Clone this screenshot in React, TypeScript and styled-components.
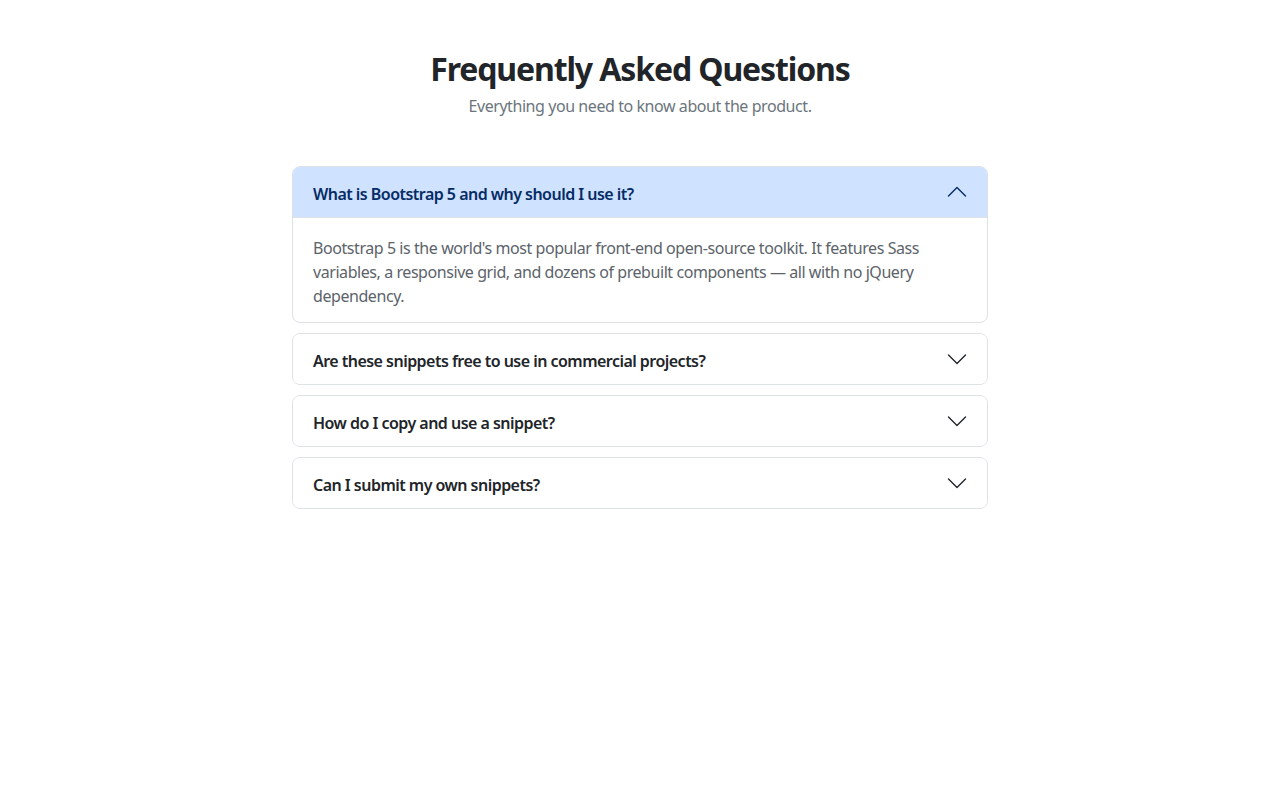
import React, { useState } from "react";
import styled, { createGlobalStyle } from "styled-components";

const GlobalStyle = createGlobalStyle`
  * { box-sizing: border-box; }
  html, body { margin: 0; padding: 0; background: #fff; }
  body {
    font-family: "Noto Sans", "Open Sans", "Liberation Sans", sans-serif;
    color: #212529;
  }
`;

const Page = styled.main`
  display: flex;
  flex-direction: column;
  align-items: center;
  padding: 50px 12px 40px;
`;

const Header = styled.header`
  display: flex;
  flex-direction: column;
  align-items: center;
  margin-bottom: 48px;
`;

const Title = styled.h2`
  margin: 0 0 6px;
  font-size: 32px;
  line-height: 1.2;
  font-weight: 700;
  letter-spacing: -0.035em;
  color: #212529;
`;

const Subtitle = styled.p`
  margin: 0;
  font-size: 16px;
  line-height: 24px;
  letter-spacing: -0.027em;
  color: #6c757d;
`;

const Accordion = styled.div`
  width: 696px;
  display: flex;
  flex-direction: column;
  gap: 10px;
`;

const Item = styled.div`
  border: 1px solid #dee2e6;
  border-radius: 8px;
  overflow: hidden;
  background: #fff;
`;

const Trigger = styled.button<{ $open: boolean }>`
  width: 100%;
  display: flex;
  align-items: center;
  justify-content: space-between;
  padding: 17px 20px 13px;
  border: 0;
  margin: 0;
  font-family: inherit;
  font-size: 16px;
  line-height: 20px;
  font-weight: 600;
  letter-spacing: -0.033em;
  text-align: left;
  cursor: pointer;
  background: ${(p) => (p.$open ? "#cfe2ff" : "#fff")};
  color: ${(p) => (p.$open ? "#052c65" : "#212529")};
  border-bottom: ${(p) => (p.$open ? "1px solid #dee2e6" : "0")};
`;

const Chevron = styled.svg<{ $open: boolean }>`
  flex-shrink: 0;
  width: 20px;
  height: 20px;
  margin-top: -4px;
  transform: ${(p) => (p.$open ? "rotate(180deg)" : "none")};
`;

const Body = styled.div`
  padding: 18px 20px 14px;
  font-size: 16px;
  line-height: 24px;
  letter-spacing: -0.027em;
  color: #5c636a;
`;

const faqs = [
  {
    q: "What is Bootstrap 5 and why should I use it?",
    a: "Bootstrap 5 is the world's most popular front-end open-source toolkit. It features Sass variables, a responsive grid, and dozens of prebuilt components — all with no jQuery dependency.",
  },
  {
    q: "Are these snippets free to use in commercial projects?",
    a: "Yes. All snippets are released under the MIT license, so you can use them in personal and commercial projects.",
  },
  {
    q: "How do I copy and use a snippet?",
    a: "Open a snippet, click the copy button, and paste the HTML into your Bootstrap 5 project.",
  },
  {
    q: "Can I submit my own snippets?",
    a: "Absolutely. Create an account and use the submit form to share your snippet with the community.",
  },
];

export default function App() {
  const [open, setOpen] = useState<number>(0);
  return (
    <>
      <GlobalStyle />
      <Page>
        <Header>
          <Title>Frequently Asked Questions</Title>
          <Subtitle>Everything you need to know about the product.</Subtitle>
        </Header>
        <Accordion>
          {faqs.map((f, i) => {
            const isOpen = open === i;
            return (
              <Item key={i}>
                <Trigger $open={isOpen} onClick={() => setOpen(isOpen ? -1 : i)}>
                  <span>{f.q}</span>
                  <Chevron $open={isOpen} viewBox="0 0 20 20" fill="none">
                    <path
                      d="M1.5 6 L10 14.5 L18.5 6"
                      stroke="currentColor"
                      strokeWidth="1.4"
                      strokeLinecap="round"
                      strokeLinejoin="round"
                    />
                  </Chevron>
                </Trigger>
                {isOpen && <Body>{f.a}</Body>}
              </Item>
            );
          })}
        </Accordion>
      </Page>
    </>
  );
}
